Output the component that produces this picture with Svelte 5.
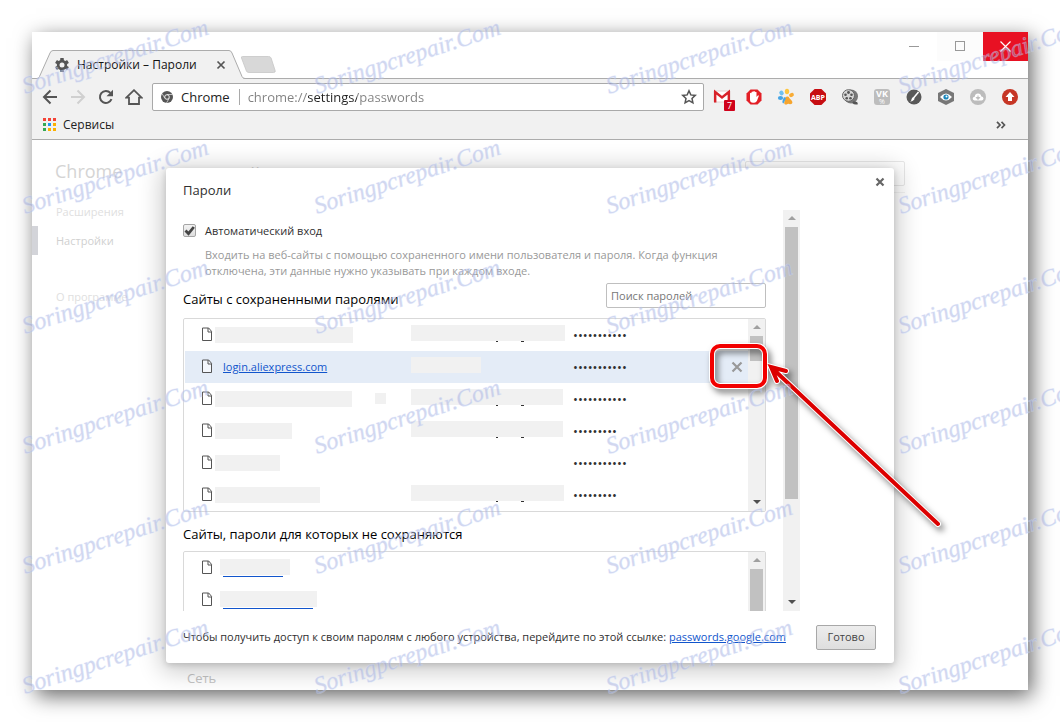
<script>
  // Saved logins; site and user hold the widths of the blanked-out names
  const saved = [
    { site: 138, user: 154, dots: 11 },
    { link: 'login.aliexpress.com', user: 70, dots: 11, active: true },
    { site: 137, extra: true, user: 152, dots: 11 },
    { site: 77, user: 152, dots: 9 },
    { site: 65, user: 0, dots: 11 },
    { site: 105, user: 153, dots: 9 }
  ];

  const never = [
    { mask: 70, line: 60 },
    { mask: 97, line: 90 }
  ];

  const appColors = ['#f44336', '#f44336', '#f44336', '#34a853', '#2196f3', '#fbb000', '#34a853', '#fbb000', '#fbb000'];

  const stampCols = [25, 317, 609, 901];
  const stampRows = [94, 214, 334, 454, 574, 694];

  let autoLogin = true;
  let query = '';
  let url = 'chrome://settings/passwords';
</script>

{#snippet scroll(size, down)}
  <div class="scrollbar" aria-hidden="true">
    <span class="arrow up"></span>
    <span class="thumb" style="height: {size}px"></span>
    {#if down}<span class="arrow down"></span>{/if}
  </div>
{/snippet}

{#snippet page()}
  <svg class="page-icon" width="11" height="15" viewBox="0 0 11 15">
    <path d="M.5 1h6.2L9.500 4.300V13.500H.5z" fill="#fff" fill-opacity=".6" stroke="#555" />
    <path d="M6 1v4h3.500" fill="none" stroke="#555" />
  </svg>
{/snippet}

<div class="desktop">
  <div class="window">
    <header class="titlebar">
      <div class="tab">
        <svg class="tab-shape" width="208" height="29" viewBox="0 0 208 29">
          <path d="M0 28.500q1.500 0 2.500-2L13 3q1-2.500 3-2.500h176q2 0 3 2.500l10 23.500q1 2 3 2V29H0z" fill="#f1f1f1" stroke="#acacac" />
          <path d="M2 29h204" stroke="#f1f1f1" stroke-width="2" />
        </svg>
        <svg width="16" height="16" viewBox="0 0 16 16">
          <g fill="#555">
            <circle cx="8" cy="8" r="5.200" />
            {#each [0, 60, 120] as angle}
              <rect x="6.200" y="1" width="3.600" height="14" rx=".6" transform="rotate({angle} 8 8)" />
            {/each}
          </g>
          <circle cx="8" cy="8" r="2.500" fill="#f1f1f1" />
        </svg>
        <span class="tab-title">Настройки – Пароли</span>
        <button class="plain" aria-label="Закрыть вкладку">
          <svg width="10" height="10" viewBox="0 0 10 10"><path d="M1.500 1.500l7 7M8.500 1.500l-7 7" stroke="#555" stroke-width="1.700" /></svg>
        </button>
      </div>
      <button class="plain new-tab" aria-label="Новая вкладка">
        <svg width="36" height="18" viewBox="0 0 36 18"><path d="M2.500.5h26q2 0 2.600 1.500l4 12.500q.6 2-1.500 2H9q-2 0-2.600-1.500L1.500 2Q1 .5 2.500.5z" fill="#d8d8d8" stroke="#c6c6c6" stroke-width=".8" /></svg>
      </button>
      <div class="controls">
        <button aria-label="Свернуть"><svg width="11" height="11"><path d="M0 5.500h10" stroke="#999" /></svg></button>
        <button class="max" aria-label="Развернуть"><svg width="11" height="11"><rect x=".5" y=".5" width="9" height="9" fill="none" stroke="#999" /></svg></button>
        <button class="close" aria-label="Закрыть"><svg width="11" height="11"><path d="M.5.500l10 10M10.500.500l-10 10" stroke="#fff" stroke-width="1.200" /></svg></button>
      </div>
    </header>

    <div class="toolbar">
      <button class="plain nav" aria-label="Назад">
        <svg width="16" height="16" viewBox="0 0 16 16"><path d="M15 8H2M8.500 1.500L2 8l6.500 6.500" fill="none" stroke="#555" stroke-width="2" /></svg>
      </button>
      <button class="plain nav" aria-label="Вперёд">
        <svg width="16" height="16" viewBox="0 0 16 16"><path d="M1 8h13M7.500 1.500L14 8l-6.500 6.500" fill="none" stroke="#d0d0d0" stroke-width="2" /></svg>
      </button>
      <button class="plain nav" aria-label="Обновить">
        <svg width="16" height="16" viewBox="0 0 16 16"><path d="M13.500 10.200A6 6 0 1 1 12.400 3.900" fill="none" stroke="#555" stroke-width="2" /><path d="M15 .7v6.500H8.500z" fill="#555" /></svg>
      </button>
      <button class="plain nav" aria-label="Домой">
        <svg width="18" height="16" viewBox="0 0 18 16"><path d="M1.300 8.700L9 1.200l7.700 7.500H14V15H4V8.700z" fill="none" stroke="#555" stroke-width="1.800" /></svg>
      </button>

      <label class="omnibox">
        <svg width="12" height="12" viewBox="0 0 12 12">
          <circle cx="6" cy="6" r="6" fill="#555" />
          <path d="M6 3.500h5.600M3.800 7.200L1.200 2.800M8.200 7.200L5.500 12" stroke="#f1f1f1" stroke-width=".7" />
          <circle cx="6" cy="6" r="2.300" fill="#555" stroke="#fff" stroke-width=".9" />
        </svg>
        <span class="origin">Chrome</span>
        <input class="url" type="text" bind:value={url} aria-label="Адрес" />
        <svg width="16" height="16" viewBox="0 0 16 16"><path d="M8 1.800l1.800 4.100 4.500.5-3.300 3 .9 4.400L8 11.600l-3.900 2.200.9-4.400-3.300-3 4.500-.5z" fill="none" stroke="#555" stroke-width="1.500" /></svg>
      </label>

      <div class="extensions">
        <button class="plain gmail" aria-label="Gmail">
          <svg width="18" height="18" viewBox="0 0 18 18"><path d="M1 3h16v11H1z" fill="#fff" stroke="#e3d0d0" /><path d="M2.200 14.500V4L9 9.500 15.800 4v10.500" fill="none" stroke="#d8222a" stroke-width="2.400" /></svg>
          <span class="badge">7</span>
        </button>
        <button class="plain" aria-label="AdBlock">
          <svg width="18" height="18" viewBox="0 0 18 18"><path d="M5.500 1.500h7l4 4v7l-4 4h-7l-4-4v-7z" fill="#e31f26" /><path d="M5 9.500V5.200q.8-1 1.500 0V4q.8-1.200 1.700 0V3.400q.8-1 1.700 0V4.300q.8-1 1.600 0v4.600l1.300-1.500q1-.3 1 .7l-1.900 5q-1 1.700-2.700 1.700H8q-3 0-3-3.300z" fill="#fff" /></svg>
        </button>
        <button class="plain" aria-label="Лапка">
          <svg width="18" height="18" viewBox="0 0 18 18">
            <ellipse cx="10" cy="3.500" rx="2.200" ry="2.800" fill="#fdc63f" /><ellipse cx="14.500" cy="7" rx="2.500" ry="2" fill="#f8ac36" transform="rotate(-25 14.500 7)" />
            <ellipse cx="4.500" cy="5" rx="2.100" ry="2.500" fill="#6fc0f0" transform="rotate(-35 4.500 5)" /><ellipse cx="3.500" cy="10" rx="2.600" ry="1.900" fill="#45a4e5" />
            <path d="M8.500 9q3-1.300 3.800 1l2.700 3q1.400 3-2 3.200-2-1-3.200.3-3 .5-2.500-2.500z" fill="#f6a52e" /><path d="M7 9l2 1-2.500 5.500q-2-1-.5-4z" fill="#45a4e5" />
          </svg>
        </button>
        <button class="plain abp" aria-label="Adblock Plus">
          <svg width="18" height="18" viewBox="0 0 18 18"><path d="M5.600 1h6.800L17 5.600v6.800L12.400 17H5.600L1 12.400V5.600z" fill="#c70d12" /><text x="9" y="12" text-anchor="middle" font-size="7" font-weight="700" fill="#fff">ABP</text></svg>
        </button>
        <button class="plain" aria-label="Видео">
          <svg width="18" height="18" viewBox="0 0 18 18"><ellipse cx="10" cy="8.500" rx="7" ry="7" fill="#777" /><ellipse cx="7.500" cy="7.500" rx="6" ry="5.800" fill="#d6d6d6" stroke="#666" />
            <g fill="#555"><circle cx="7.500" cy="4.500" r="1.400" /><circle cx="4.500" cy="6.800" r="1.300" /><circle cx="10.500" cy="6.800" r="1.300" /><circle cx="5.700" cy="10.200" r="1.300" /><circle cx="9.500" cy="10.200" r="1.300" /></g>
            <path d="M12 14q2 2 4.500 1" fill="none" stroke="#555" stroke-width="2.500" /></svg>
        </button>
        <button class="plain" aria-label="VK">
          <svg width="18" height="18" viewBox="0 0 18 18"><rect x="1" y="1" width="16" height="16" rx="3" fill="#bdbdbd" /><text x="9" y="9" text-anchor="middle" font-size="9" font-weight="700" fill="#fff">VK</text><text x="9" y="16" text-anchor="middle" font-size="7" fill="#fff">%</text></svg>
        </button>
        <button class="plain" aria-label="Кисть">
          <svg width="18" height="18" viewBox="0 0 18 18"><circle cx="9" cy="9" r="7.500" fill="#595959" /><path d="M13.500 4L8.500 10" stroke="#fff" stroke-width="1.500" /><path d="M8.500 9q1.300.8.800 2.500-1.500 2-4.300 2.300 1.500-1 1.500-2.600.4-2 2-2.200z" fill="#fff" /></svg>
        </button>
        <button class="plain" aria-label="Просмотр">
          <svg width="18" height="18" viewBox="0 0 18 18"><path d="M9 1l8 4v8l-8 4-8-4V5z" fill="#777" /><path d="M3 9q6-7 12 0-6 7-12 0z" fill="#fff" /><circle cx="9" cy="9" r="2.600" fill="#1c87bb" /><circle cx="9.500" cy="8.500" r="1" fill="#fff" /></svg>
        </button>
        <button class="plain" aria-label="Облако">
          <svg width="18" height="18" viewBox="0 0 18 18"><circle cx="9" cy="9" r="8" fill="#bcbcbc" /><path d="M5.500 12.500q-2-.3-1.800-2.200.3-1.600 2-1.600Q6.200 5.500 9 5.500t3.300 3q2-.1 2.200 1.900 0 1.900-2 2.100z" fill="#fff" /><path d="M9 7.500v2.500M7.200 9.500h3.600L9 11.500z" fill="#bcbcbc" stroke="#bcbcbc" /></svg>
        </button>
        <button class="plain" aria-label="Обновление">
          <svg width="18" height="18" viewBox="0 0 18 18"><circle cx="9" cy="9" r="8" fill="#c63626" /><path d="M9 4l4.500 5H11v4H7V9H4.500z" fill="#fff" /></svg>
        </button>
      </div>
    </div>

    <nav class="bookmarks">
      <a href="#apps">
        <span class="apps">{#each appColors as color}<i style="background: {color}"></i>{/each}</span>
        Сервисы
      </a>
      <button class="plain more" aria-label="Ещё">
        <svg width="10" height="8" viewBox="0 0 10 8"><path d="M1 .8L4 4 1 7.200M5.500.8L8.500 4l-3 3.200" fill="none" stroke="#555" stroke-width="1.700" /></svg>
      </button>
    </nav>

    <main>
      <aside>
        <h1>Chrome</h1>
        <a href="#extensions">Расширения</a>
        <a class="current" href="#settings">Настройки</a>
        <a class="about" href="#about">О программе</a>
      </aside>
      <section class="settings">
        <div class="settings-head">
          <h1>Настройки</h1>
          <input type="search" aria-label="Поиск настроек" />
        </div>
        <h2>Сеть</h2>
      </section>

      <div class="overlay">
        <div class="dialog" role="dialog" aria-labelledby="dialog-title">
          <h2 id="dialog-title">Пароли</h2>
          <button class="plain dialog-close" aria-label="Закрыть">
            <svg width="10" height="10" viewBox="0 0 10 10"><path d="M1.500 1.500l7 7M8.500 1.500l-7 7" stroke="#666" stroke-width="2.200" /></svg>
          </button>

          <div class="viewport">
            <div class="content">
              <label class="check">
                <span class="box">
                  <input type="checkbox" bind:checked={autoLogin} />
                  {#if autoLogin}
                    <svg width="13" height="13" viewBox="0 0 13 13"><path d="M2.500 6.500l3 3.200L10.800 3" fill="none" stroke="#444" stroke-width="2.800" /></svg>
                  {/if}
                </span>
                Автоматический вход
              </label>
              <p class="hint">Входить на веб-сайты с помощью сохраненного имени пользователя и пароля. Когда функция отключена, эти данные нужно указывать при каждом входе.</p>

              <div class="list-head">
                <h3>Сайты с сохраненными паролями</h3>
                <input type="search" placeholder="Поиск паролей" aria-label="Поиск паролей" bind:value={query} />
              </div>
              <div class="list">
                <ul>
                  {#each saved as item}
                    <li class:active={item.active}>
                      {@render page()}
                      <span class="site">
                        {#if item.link}
                          <a href="#site">{item.link}</a>
                        {:else}
                          <span class="mask" style="width: {item.site}px"></span>
                        {/if}
                        {#if item.extra}<span class="mask small"></span>{/if}
                      </span>
                      <span class="user">
                        {#if item.user}
                          <span class="mask" class:tails={item.user > 100} style="width: {item.user}px"></span>
                        {/if}
                      </span>
                      <span class="secret">{'•'.repeat(item.dots)}</span>
                      {#if item.active}
                        <button class="plain remove" aria-label="Удалить">
                          <svg width="12" height="12" viewBox="0 0 12 12"><path d="M1.500 1.500l9 9M10.500 1.500l-9 9" stroke="#999" stroke-width="2.200" /></svg>
                        </button>
                      {/if}
                    </li>
                  {/each}
                </ul>
                {@render scroll(25, true)}
              </div>

              <h3 class="second">Сайты, пароли для которых не сохраняются</h3>
              <div class="list">
                <ul>
                  {#each never as item}
                    <li>
                      {@render page()}
                      <span class="never">
                        <span class="mask" style="width: {item.mask}px"></span>
                        <span class="underline" style="width: {item.line}px"></span>
                      </span>
                    </li>
                  {/each}
                </ul>
                {@render scroll(60, false)}
              </div>
            </div>
            {@render scroll(272, true)}
          </div>

          <footer>
            <p>Чтобы получить доступ к своим паролям с любого устройства, перейдите по этой ссылке: <a href="#passwords">passwords.google.com</a></p>
            <button class="done">Готово</button>
          </footer>

          <!-- red frame and arrow pointing at the remove button -->
          <svg class="callout" aria-hidden="true">
            <g fill="none" stroke="#fff" stroke-width="6" stroke-linecap="round">
              <rect x="546" y="178" width="53" height="40" rx="8" />
              <path d="M772 356L606 200M620 203l-15-4 6 14" />
            </g>
            <rect x="546" y="178" width="53" height="40" rx="8" fill="none" stroke="#f20000" stroke-width="4" />
            <path d="M772 356L606 200M620 203l-15-4 6 14" fill="none" stroke="#dc0000" stroke-width="4" stroke-linecap="round" />
          </svg>
        </div>
      </div>
    </main>
  </div>

  <svg class="stamps" aria-hidden="true">
    {#each stampRows as y}
      {#each stampCols as x}
        <text transform="translate({x} {y}) rotate(-18)">Soringpcrepair.Com</text>
      {/each}
    {/each}
  </svg>
</div>

<style>
  :global(body) {
    margin: 0;
    background: #fff;
  }

  * {
    box-sizing: border-box;
  }

  .desktop {
    position: relative;
    display: flex;
    min-height: 100vh;
    padding: 32px;
    overflow: hidden;
    font-family: "Open Sans", "Noto Sans", sans-serif;
    font-size: 11px;
    line-height: 16px;
    color: #303030;
  }

  .window {
    flex: 1;
    display: flex;
    flex-direction: column;
    min-width: 0;
    background: #fff;
    box-shadow: 4px 6px 20px rgba(0, 0, 0, 0.6);
  }

  h1, h2, h3, p, ul {
    margin: 0;
    padding: 0;
    font-weight: 400;
  }

  button, input {
    font: inherit;
    color: inherit;
  }

  svg {
    flex: none;
    display: block;
  }

  .plain {
    display: grid;
    place-items: center;
    padding: 0;
    border: 0;
    background: none;
  }

  /* title bar */
  .titlebar {
    display: flex;
    align-items: flex-end;
    height: 47px;
    padding-left: 5px;
    border-bottom: 1px solid #acacac;
  }

  .tab {
    position: relative;
    display: flex;
    align-items: center;
    gap: 7px;
    width: 208px;
    height: 28px;
    margin-bottom: -1px;
    padding: 0 19px 0 17px;
    color: #111;
  }

  .tab > * {
    position: relative;
  }

  .tab .tab-shape {
    position: absolute;
    left: 0;
    bottom: 0;
  }

  .tab-title {
    flex: 1;
    font-size: 12px;
    white-space: nowrap;
  }

  .new-tab {
    margin: 0 0 4px -5px;
  }

  .controls {
    display: flex;
    align-self: flex-start;
    margin-left: auto;
  }

  .controls button {
    display: grid;
    place-items: center;
    width: 46px;
    height: 29px;
    padding: 0;
    border: 0;
    background: none;
  }

  .controls .max {
    background: #fcfcfc;
  }

  .controls .close {
    width: 45px;
    background: #e81123;
  }

  /* toolbar */
  .toolbar {
    display: flex;
    align-items: center;
    gap: 10px;
    height: 36px;
    padding: 0 9px;
    background: #f1f1f1;
  }

  .nav {
    width: 18px;
    height: 18px;
  }

  .omnibox {
    flex: 1;
    display: flex;
    align-items: center;
    min-width: 0;
    height: 28px;
    margin: 0 -1px;
    padding: 0 6px 0 8px;
    border: 1px solid #a9a9a9;
    border-radius: 2px;
    background: #fff;
    font-size: 13px;
    color: #222;
  }

  .origin {
    margin-left: 8px;
    padding-right: 9px;
    border-right: 1px solid #a9a9a9;
  }

  .url {
    flex: 1;
    min-width: 0;
    padding: 0 0 0 8px;
    border: 0;
    outline: 0;
    background: linear-gradient(90deg, #808080 68px, #222 68px 117px, #808080 117px);
    background-clip: text;
    color: transparent;
  }

  .extensions {
    display: flex;
    gap: 14px;
  }

  .gmail {
    position: relative;
  }

  .badge {
    position: absolute;
    left: 11px;
    top: 12px;
    width: 11px;
    height: 11px;
    border-radius: 1px;
    background: #d0021b;
    color: #fff;
    font-size: 9px;
    line-height: 11px;
  }

  .bookmarks {
    display: flex;
    align-items: center;
    justify-content: space-between;
    height: 25px;
    padding: 0 22px 5px 11px;
    border-bottom: 1px solid #acacac;
    background: #f1f1f1;
    font-size: 12px;
  }

  .bookmarks a {
    display: flex;
    align-items: center;
    gap: 7px;
    color: #222;
    text-decoration: none;
  }

  .apps {
    display: grid;
    grid-template-columns: repeat(3, 3px);
    gap: 2px;
  }

  .apps i {
    height: 3px;
  }

  /* dimmed settings page */
  main {
    position: relative;
    flex: 1;
    display: flex;
  }

  main h1 {
    font-size: 18px;
    line-height: 24px;
    color: #d4d4d4;
  }

  aside {
    display: flex;
    flex-direction: column;
    width: 155px;
    padding-top: 19px;
  }

  aside h1 {
    padding-left: 23px;
    margin-bottom: 14px;
  }

  aside a {
    padding-left: 24px;
    line-height: 29px;
    color: #e0e0e0;
    text-decoration: none;
  }

  aside .current {
    padding-left: 18px;
    border-left: 6px solid #d3d4d9;
    color: #d0d0d0;
  }

  aside .about {
    margin-top: 27px;
  }

  .settings {
    display: flex;
    flex-direction: column;
    justify-content: space-between;
    width: 718px;
    padding-bottom: 2px;
  }

  .settings-head {
    display: flex;
    align-items: center;
    justify-content: space-between;
    padding: 21px 0 6px;
    border-bottom: 1px solid #f3f3f3;
  }

  .settings-head h1 {
    line-height: 20px;
  }

  .settings-head input {
    width: 160px;
    height: 25px;
    border: 1px solid #e8e8e8;
    border-radius: 2px;
    background: #fff;
  }

  .settings h2 {
    font-size: 13px;
    line-height: 20px;
    color: #c4c4c4;
  }

  /* passwords dialog */
  .overlay {
    position: absolute;
    inset: 0;
    display: grid;
    place-items: center;
  }

  .dialog {
    position: relative;
    width: 728px;
    border-radius: 3px;
    background: #fff;
    box-shadow: 0 4px 23px 5px rgba(0, 0, 0, 0.2), 0 2px 6px rgba(0, 0, 0, 0.15);
  }

  .dialog > h2 {
    padding: 12px 17px 10px;
    font-size: 13px;
    line-height: 20px;
  }

  .dialog-close {
    position: absolute;
    top: 9px;
    right: 9px;
  }

  .viewport {
    display: flex;
    gap: 17px;
    width: 617px;
    height: 401px;
    margin-left: 17px;
    overflow: hidden;
  }

  .content {
    flex: 1;
    min-width: 0;
  }

  .check {
    display: flex;
    align-items: center;
    gap: 9px;
    padding-top: 11px;
    line-height: 20px;
  }

  .box {
    display: grid;
    width: 13px;
    height: 13px;
  }

  .box > * {
    grid-area: 1 / 1;
  }

  .box input {
    appearance: none;
    width: 13px;
    height: 13px;
    margin: 0;
    border: 1px solid #a5a5a5;
    border-radius: 2px;
    background: linear-gradient(#f2f2f2, #dedede);
  }

  .hint {
    max-width: 530px;
    margin: 6px 0 4px 22px;
    color: #999;
  }

  .list-head {
    display: flex;
    align-items: flex-end;
    justify-content: space-between;
    margin-bottom: 10px;
  }

  h3 {
    font-size: 13px;
    line-height: 18px;
    color: #000;
  }

  .list-head input {
    width: 160px;
    height: 25px;
    padding: 0 4px;
    border: 1px solid #bfbfbf;
    border-radius: 2px;
    background: #fff;
  }

  .list-head input::placeholder {
    color: #777;
  }

  .second {
    margin: 13px 0 8px;
  }

  .list {
    display: flex;
    border: 1px solid #d9d9d9;
    border-radius: 2px;
  }

  .list ul {
    flex: 1;
    list-style: none;
  }

  li {
    display: grid;
    grid-template-columns: 11px 198px 162px 1fr auto;
    align-items: center;
    height: 32px;
    margin-left: 1px;
    padding: 0 5px 0 17px;
  }

  li.active {
    background: #e4ecf7;
  }

  .site {
    display: flex;
    align-items: center;
    justify-content: space-between;
    padding: 0 25px 0 2px;
  }

  .site a {
    padding-left: 8px;
  }

  .secret {
    font-size: 13px;
  }

  a {
    color: #15c;
  }

  .mask {
    position: relative;
    display: block;
    height: 16px;
    background: #f1f1f1;
  }

  .mask.small {
    width: 11px;
    height: 11px;
  }

  .user {
    padding-bottom: 3px;
  }

  /* descenders left below the blanked-out login */
  .tails::after {
    content: "";
    position: absolute;
    left: 85px;
    bottom: -1px;
    width: 2px;
    height: 1px;
    background: #333;
    box-shadow: 25px 0 #333, 26px 0 #333;
  }

  .remove {
    width: 12px;
    height: 12px;
  }

  .never {
    display: grid;
    gap: 1px;
    padding-left: 7px;
  }

  .underline {
    height: 1px;
    margin-left: 3px;
    background: #15c;
  }

  .scrollbar {
    display: flex;
    flex-direction: column;
    align-items: center;
    width: 17px;
    background: #f1f1f1;
  }

  .thumb {
    flex: none;
    width: 13px;
    background: #c1c1c1;
  }

  .arrow {
    display: grid;
    place-items: center;
    height: 17px;
  }

  .arrow::before {
    content: "";
    border: 4px solid transparent;
  }

  .up::before {
    border-top: 0;
    border-bottom-color: #a0a0a0;
  }

  .down {
    margin-top: auto;
  }

  .down::before {
    border-bottom: 0;
    border-top-color: #505050;
  }

  footer {
    display: flex;
    align-items: center;
    justify-content: space-between;
    padding: 14px 18px 13px 17px;
  }

  .done {
    flex: none;
    width: 60px;
    height: 25px;
    padding: 0;
    border: 1px solid #a8a8a8;
    border-radius: 2px;
    background: linear-gradient(#ededed, #dedede);
    color: #444;
  }

  .callout {
    position: absolute;
    inset: 0;
    width: 100%;
    height: 100%;
    overflow: visible;
    pointer-events: none;
    filter: drop-shadow(3px 4px 3px rgba(0, 0, 0, 0.5));
  }

  .stamps {
    position: absolute;
    inset: 0;
    width: 100%;
    height: 100%;
    pointer-events: none;
  }

  .stamps text {
    font-family: "Liberation Serif", serif;
    font-size: 24px;
    font-style: italic;
    fill: #8c96d2;
    fill-opacity: 0.4;
    stroke: #cfdcfa;
    stroke-opacity: 0.4;
    stroke-width: 1px;
  }
</style>
